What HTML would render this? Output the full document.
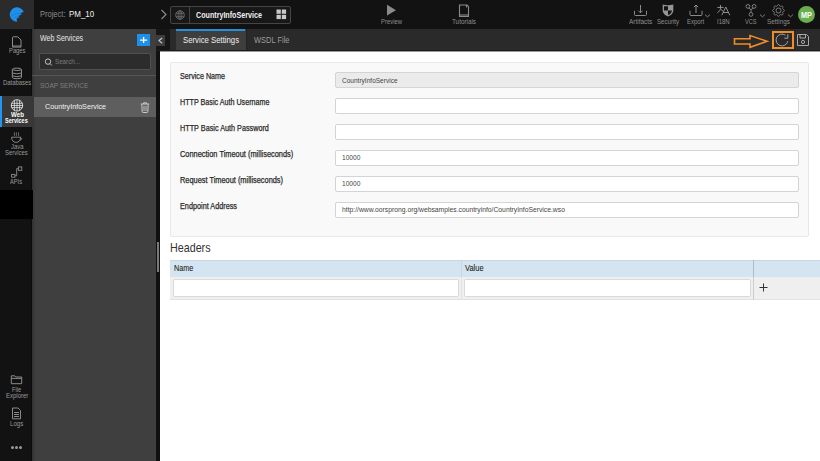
<!DOCTYPE html>
<html><head><meta charset="utf-8">
<style>
*{margin:0;padding:0;box-sizing:border-box}
html,body{width:820px;height:461px;overflow:hidden;background:#fff;font-family:"Liberation Sans",sans-serif}
.a{position:absolute}
.t{position:absolute;white-space:nowrap;line-height:1;transform-origin:0 0}
</style></head><body>
<!-- base areas -->
<div class="a" style="left:0;top:0;width:820px;height:29px;background:#121212"></div>
<div class="a" style="left:0;top:0;width:34px;height:29px;background:#2b2b2b"></div>
<div class="a" style="left:0;top:29px;width:32px;height:432px;background:#121212"></div>
<div class="a" style="left:32px;top:29px;width:124px;height:432px;background:linear-gradient(90deg,#303030 0,#3a3a3a 2px,#3f3f3f 4px,#3f3f3f 100%)"></div>
<div class="a" style="left:31px;top:29px;width:1px;height:432px;background:#0b0b0b"></div>
<div class="a" style="left:156px;top:29px;width:4px;height:432px;background:#111"></div>
<div class="a" style="left:156px;top:29px;width:664px;height:22px;background:#161616"></div>
<div class="a" style="left:170px;top:29px;width:650px;height:22px;background:#2a2a2a"></div>
<div class="a" style="left:160px;top:51px;width:660px;height:410px;background:#fff"></div>

<!-- logo -->
<svg class="a" style="left:9px;top:7px" width="16" height="16" viewBox="0 0 16 16">
<path d="M14.8 5 A7.25 7.25 0 1 0 8.2 14.8 L7.6 11.9 Q8.8 10.6 10.5 10.2 L9.5 9.3 Q11 7.9 12.8 7.6 L11.5 6.3 Q13 5.2 14.8 5 Z" fill="#1f8fe9"/>
<path d="M1.4 9.6 Q4.5 6.2 11.5 6.3 M3.6 12.6 Q5.6 9.4 9.5 9.3" stroke="#1878c8" stroke-width="0.6" fill="none"/>
</svg>

<!-- chevron & selector -->
<svg class="a" style="left:160px;top:9px" width="8" height="11" viewBox="0 0 8 11"><path d="M1.5 1 L6 5.5 L1.5 10" stroke="#8a8a8a" stroke-width="1.2" fill="none"/></svg>
<div class="a" style="left:170px;top:6px;width:121px;height:18px;border:1px solid #454545;border-radius:2px;background:#181818"></div>
<div class="a" style="left:189px;top:7px;width:1px;height:16px;background:#454545"></div>
<svg class="a" style="left:175px;top:10px" width="10" height="10" viewBox="0 0 10 10" fill="none" stroke="#6f6f6f" stroke-width="0.8"><circle cx="5" cy="5" r="4.3"/><ellipse cx="5" cy="5" rx="2" ry="4.3"/><path d="M0.7 3.3H9.3M0.7 6.7H9.3M5 0.7V9.3"/></svg>
<svg class="a" style="left:276px;top:9px" width="11" height="11" viewBox="0 0 11 11" fill="#c8c8c8"><rect x="0.5" y="0.5" width="4.3" height="4.3"/><rect x="5.8" y="0.5" width="4.3" height="4.3"/><rect x="0.5" y="5.8" width="4.3" height="4.3"/><rect x="5.8" y="5.8" width="4.3" height="4.3"/></svg>

<!-- preview / tutorials -->
<svg class="a" style="left:386px;top:4px" width="11" height="13" viewBox="0 0 11 13"><path d="M1 0.8 L10 6.2 L1 11.6 Z" fill="#8a8a8a"/></svg>
<svg class="a" style="left:458px;top:4px" width="12" height="14" viewBox="0 0 12 14" fill="none" stroke="#8a8a8a" stroke-width="1.1"><path d="M1.5 1 H9 L10.5 2.5 V12.5 H1.5 Z"/><path d="M1.5 11 H10.5" /><path d="M8.5 1 V3.5"/></svg>

<!-- right icons -->
<svg class="a" style="left:633px;top:5px" width="15" height="12" viewBox="0 0 15 12" fill="none" stroke="#8a8a8a" stroke-width="1"><path d="M1.5 5.8 V9.5 Q1.5 10.5 2.5 10.5 H12.5 Q13.5 10.5 13.5 9.5 V5.8"/><path d="M7.5 0 V7.8 M5.4 5.7 L7.5 7.8 L9.6 5.7"/></svg>
<svg class="a" style="left:662px;top:4px" width="12" height="13" viewBox="0 0 12 13"><path d="M0.7 0.6 Q6 1.8 11.3 0.6 V6.2 C11.3 9.4 8.6 11.4 6 12.4 C3.4 11.4 0.7 9.4 0.7 6.2 Z" fill="#959595"/><path d="M2 2.2 H6 V6.5 H2 Z M6 6.5 H10 C9.8 8.8 8 10.4 6 11.1 Z" fill="#141414"/></svg>
<svg class="a" style="left:689px;top:4px" width="14" height="13" viewBox="0 0 14 13" fill="none" stroke="#8a8a8a" stroke-width="1"><path d="M1 6.8 V10.5 Q1 11.5 2 11.5 H12 Q13 11.5 13 10.5 V6.8"/><path d="M7 9 V1 M4.9 3.1 L7 1 L9.1 3.1"/></svg>
<svg class="a" style="left:704px;top:13px" width="7" height="5" viewBox="0 0 7 5" fill="none" stroke="#8a8a8a" stroke-width="0.9"><path d="M1 1.6 L3.5 3.8 L6 1.6"/></svg>
<svg class="a" style="left:716px;top:4px" width="15" height="12" viewBox="0 0 15 12" fill="none" stroke="#9a9a9a" stroke-width="0.9"><path d="M1.3 3.4 H7.6 M4.5 1 V4.2 C4.4 6.2 3.2 7.6 1.3 8.8 M4.7 5 L7.2 7.4"/><path d="M5.8 11.2 L9.8 3 L13.8 11.2 M7.2 8.5 H12.4"/></svg>
<svg class="a" style="left:744px;top:3px" width="14" height="15" viewBox="0 0 14 15" fill="none" stroke="#8a8a8a" stroke-width="0.9"><circle cx="3.9" cy="3.4" r="1.9"/><circle cx="10.1" cy="3.4" r="1.9"/><circle cx="7" cy="11.4" r="1.9"/><path d="M4.6 5.1 L7 6.6 L9.4 5.1 M7 6.6 V9.5"/></svg>
<svg class="a" style="left:759px;top:13px" width="7" height="5" viewBox="0 0 7 5" fill="none" stroke="#8a8a8a" stroke-width="0.9"><path d="M1 1.6 L3.5 3.8 L6 1.6"/></svg>
<svg class="a" style="left:771px;top:4px" width="15" height="13" viewBox="0 0 15 13" fill="none" stroke="#8a8a8a" stroke-width="0.9"><path d="M13.40 6.50 L13.38 6.73 L13.31 6.96 L13.18 7.17 L13.00 7.37 L12.60 7.51 L12.20 7.63 L12.00 7.77 L11.85 7.91 L11.74 8.06 L11.66 8.22 L11.60 8.39 L11.58 8.58 L11.58 8.79 L11.62 9.03 L11.82 9.39 L12.00 9.77 L11.99 10.04 L11.93 10.28 L11.82 10.49 L11.67 10.67 L11.49 10.82 L11.28 10.93 L11.04 10.99 L10.77 11.00 L10.39 10.82 L10.03 10.62 L9.79 10.58 L9.58 10.58 L9.39 10.60 L9.22 10.66 L9.06 10.74 L8.91 10.85 L8.77 11.00 L8.63 11.20 L8.51 11.60 L8.37 12.00 L8.17 12.18 L7.96 12.31 L7.73 12.38 L7.50 12.40 L7.27 12.38 L7.04 12.31 L6.83 12.18 L6.63 12.00 L6.49 11.60 L6.37 11.20 L6.23 11.00 L6.09 10.85 L5.94 10.74 L5.78 10.66 L5.61 10.60 L5.42 10.58 L5.21 10.58 L4.97 10.62 L4.61 10.82 L4.23 11.00 L3.96 10.99 L3.72 10.93 L3.51 10.82 L3.33 10.67 L3.18 10.49 L3.07 10.28 L3.01 10.04 L3.00 9.77 L3.18 9.39 L3.38 9.03 L3.42 8.79 L3.42 8.58 L3.40 8.39 L3.34 8.22 L3.26 8.06 L3.15 7.91 L3.00 7.77 L2.80 7.63 L2.40 7.51 L2.00 7.37 L1.82 7.17 L1.69 6.96 L1.62 6.73 L1.60 6.50 L1.62 6.27 L1.69 6.04 L1.82 5.83 L2.00 5.63 L2.40 5.49 L2.80 5.37 L3.00 5.23 L3.15 5.09 L3.26 4.94 L3.34 4.78 L3.40 4.61 L3.42 4.42 L3.42 4.21 L3.38 3.97 L3.18 3.61 L3.00 3.23 L3.01 2.96 L3.07 2.72 L3.18 2.51 L3.33 2.33 L3.51 2.18 L3.72 2.07 L3.96 2.01 L4.23 2.00 L4.61 2.18 L4.97 2.38 L5.21 2.42 L5.42 2.42 L5.61 2.40 L5.78 2.34 L5.94 2.26 L6.09 2.15 L6.23 2.00 L6.37 1.80 L6.49 1.40 L6.63 1.00 L6.83 0.82 L7.04 0.69 L7.27 0.62 L7.50 0.60 L7.73 0.62 L7.96 0.69 L8.17 0.82 L8.37 1.00 L8.51 1.40 L8.63 1.80 L8.77 2.00 L8.91 2.15 L9.06 2.26 L9.22 2.34 L9.39 2.40 L9.58 2.42 L9.79 2.42 L10.03 2.38 L10.39 2.18 L10.77 2.00 L11.04 2.01 L11.28 2.07 L11.49 2.18 L11.67 2.33 L11.82 2.51 L11.93 2.72 L11.99 2.96 L12.00 3.23 L11.82 3.61 L11.62 3.97 L11.58 4.21 L11.58 4.42 L11.60 4.61 L11.66 4.78 L11.74 4.94 L11.85 5.09 L12.00 5.23 L12.20 5.37 L12.60 5.49 L13.00 5.63 L13.18 5.83 L13.31 6.04 L13.38 6.27 Z"/><circle cx="7.5" cy="6.5" r="2.5"/></svg>
<svg class="a" style="left:787px;top:13px" width="7" height="5" viewBox="0 0 7 5" fill="none" stroke="#8a8a8a" stroke-width="0.9"><path d="M1 1.6 L3.5 3.8 L6 1.6"/></svg>
<div class="a" style="left:798px;top:6px;width:17px;height:17px;border-radius:50%;background:#6aae4f"></div>

<!-- left column -->
<div class="a" style="left:0;top:96px;width:33px;height:31px;background:#383838"></div>
<div class="a" style="left:0;top:96px;width:2px;height:31px;background:#2196f3"></div>
<div class="a" style="left:0;top:190px;width:33px;height:29px;background:#000"></div>
<svg class="a" style="left:11px;top:36px" width="11" height="13" viewBox="0 0 11 13" fill="none" stroke="#8e8e8e" stroke-width="1"><path d="M2.3 0.8 H6.8 L10 4 V11.1 H1.5 V1.6 Q1.5 0.8 2.3 0.8 Z"/><path d="M1.5 10 H10"/></svg>
<svg class="a" style="left:11px;top:67px" width="12" height="13" viewBox="0 0 12 13" fill="none" stroke="#8e8e8e" stroke-width="1"><path d="M1.3 2.4 Q1.3 1.1 5.9 1.1 Q10.5 1.1 10.5 2.4 V10.4 Q10.5 11.7 5.9 11.7 Q1.3 11.7 1.3 10.4 Z"/><path d="M1.3 2.8 Q5.9 4.4 10.5 2.8 M1.3 6 Q5.9 7.6 10.5 6 M1.3 8.9 Q5.9 10.4 10.5 8.9"/></svg>
<svg class="a" style="left:10px;top:99px" width="14" height="13" viewBox="0 0 14 13" fill="none" stroke="#f4f4f4" stroke-width="0.8"><circle cx="7" cy="6.4" r="5.7"/><path d="M4.5 1.2 Q4.1 6.4 4.5 11.6 M7 0.8 V12 M9.5 1.2 Q9.9 6.4 9.5 11.6 M1.6 4.3 H12.4 M1.1 6.5 H12.9 M1.6 8.6 H12.4" stroke-width="0.7"/></svg>
<svg class="a" style="left:10px;top:131px" width="13" height="13" viewBox="0 0 13 13" fill="none" stroke="#8e8e8e" stroke-width="0.9"><path d="M1.6 6.2 H10.6 C10.6 9.6 8.6 11.4 6.1 11.4 C3.6 11.4 1.6 9.6 1.6 6.2 Z"/><path d="M10.4 7 C12.2 6.8 12.2 8.8 10 9"/><path d="M4.4 1.3 V4.8 M6.4 1.3 V4.8 M8.5 1.3 V4.8" stroke-width="0.7"/></svg>
<svg class="a" style="left:10px;top:166px" width="13" height="13" viewBox="0 0 13 13" fill="none" stroke="#8e8e8e" stroke-width="0.9"><rect x="8.4" y="0.9" width="3.4" height="3.4"/><rect x="1.6" y="8.4" width="3.3" height="2.8"/><path d="M8.4 2.6 H6.7 V9.8 H4.9"/></svg>
<svg class="a" style="left:10px;top:374px" width="13" height="11" viewBox="0 0 13 11" fill="none" stroke="#8a8a8a" stroke-width="1"><path d="M1.3 1.8 H4.8 L5.8 3 H11.7 V9.7 H1.3 Z M1.3 4.4 H11.7"/></svg>
<svg class="a" style="left:11px;top:407px" width="11" height="13" viewBox="0 0 11 13" fill="none" stroke="#8a8a8a" stroke-width="1"><path d="M1.5 1 H7 L9.5 3.5 V11.8 H1.5 Z"/><path d="M3 5.5 H8 M3 7.5 H8 M3 9.5 H8"/></svg>
<div class="a" style="left:11px;top:446px;width:3px;height:3px;border-radius:50%;background:#999"></div>
<div class="a" style="left:15px;top:446px;width:3px;height:3px;border-radius:50%;background:#999"></div>
<div class="a" style="left:19px;top:446px;width:3px;height:3px;border-radius:50%;background:#999"></div>

<!-- panel content -->
<div class="a" style="left:137px;top:34px;width:13px;height:12px;background:#1e90ea"></div>
<svg class="a" style="left:137px;top:34px" width="13" height="12" viewBox="0 0 13 12"><path d="M6.6 2.9 V8.9 M3.1 6.2 H10.2" stroke="#fff" stroke-width="1.3"/></svg>
<div class="a" style="left:39px;top:53px;width:112px;height:17px;background:#2c2c2c;border:1px solid #505050;border-radius:2px"></div>
<svg class="a" style="left:44px;top:58px" width="9" height="8" viewBox="0 0 9 8" fill="none" stroke="#c4c4c4" stroke-width="1"><circle cx="4" cy="3.6" r="2.7"/><path d="M6 5.6 L7.8 7.4"/></svg>
<div class="a" style="left:32px;top:75px;width:124px;height:1px;background:#555"></div>
<div class="a" style="left:34px;top:97px;width:122px;height:20px;background:#5e5e5e"></div>
<svg class="a" style="left:140px;top:102px" width="10" height="11" viewBox="0 0 10 11" fill="none" stroke="#d8d8d8" stroke-width="0.9"><path d="M0.8 2 H9.2 M3.6 2 V0.8 H6.4 V2"/><path d="M1.8 2.3 L2.2 9.6 Q2.3 10.5 3.2 10.5 H6.8 Q7.7 10.5 7.8 9.6 L8.2 2.3"/><path d="M4 3.8 V9 M6 3.8 V9" stroke-width="0.8"/></svg>
<!-- gutter/collapse -->
<div class="a" style="left:157px;top:242px;width:2px;height:30px;background:#7a7a7a;border:0 solid #555"></div>

<!-- tabs -->
<div class="a" style="left:176px;top:29px;width:70px;height:21px;background:#3e3e3e"></div>
<div class="a" style="left:246px;top:29px;width:1px;height:21px;background:#232323"></div>
<div class="a" style="left:156px;top:50px;width:664px;height:1px;background:#1c1c1c"></div>
<div class="a" style="left:160px;top:51px;width:660px;height:1px;background:#9a9a9a"></div>
<div class="a" style="left:176px;top:29px;width:69px;height:2px;background:#268fd8"></div>
<svg class="a" style="left:733px;top:34px" width="37" height="15" viewBox="0 0 37 15" fill="none" stroke="#f28c28" stroke-width="1.6"><path d="M1.5 4.8 H17 V1.5 L34 7.3 L17 13.3 V10 H1.5 Z"/></svg>
<div class="a" style="left:772px;top:31px;width:22px;height:18px;border:2px solid #f28c28"></div>
<svg class="a" style="left:774px;top:32px" width="16" height="16" viewBox="0 0 16 16" fill="none" stroke="#b0b0b0" stroke-width="0.9"><path d="M11.38 3.17 A5.90 5.90 0 1 0 13.77 9.23"/><path d="M13.8 2.2 V6.2 H10.3"/></svg>
<svg class="a" style="left:796px;top:33px" width="14" height="14" viewBox="0 0 14 14" fill="none" stroke="#a8a8a8" stroke-width="1"><path d="M1.5 1.5 H10.5 L12.5 3.5 V12.5 H1.5 Z"/><path d="M4 1.5 V5 H9.5 V1.5"/><circle cx="7" cy="9" r="1.6"/></svg>

<!-- collapse btn -->
<div class="a" style="left:155px;top:35px;width:10px;height:11px;background:#3c3c3c"></div>
<svg class="a" style="left:157px;top:37px" width="7" height="7" viewBox="0 0 7 7" fill="none" stroke="#c8c8c8" stroke-width="0.9"><path d="M5.2 1 L2 3.6 L5.2 6.2" stroke-width="1.15"/></svg>
<!-- form -->
<div class="a" style="left:170px;top:62px;width:639px;height:175px;background:#f9f9f9;border:1px solid #e8e8e8;border-radius:2px"></div>
<div class="a" style="left:335px;top:72px;width:464px;height:16px;border:1px solid #d4d4d4;border-radius:2px;background:#ebebeb"></div>
<div class="a" style="left:335px;top:98px;width:464px;height:16px;border:1px solid #d4d4d4;border-radius:2px;background:#fff"></div>
<div class="a" style="left:335px;top:124px;width:464px;height:16px;border:1px solid #d4d4d4;border-radius:2px;background:#fff"></div>
<div class="a" style="left:335px;top:150px;width:464px;height:16px;border:1px solid #d4d4d4;border-radius:2px;background:#fff"></div>
<div class="a" style="left:335px;top:176px;width:464px;height:16px;border:1px solid #d4d4d4;border-radius:2px;background:#fff"></div>
<div class="a" style="left:335px;top:202px;width:464px;height:16px;border:1px solid #d4d4d4;border-radius:2px;background:#fff"></div>

<!-- headers -->
<div class="a" style="left:170px;top:260px;width:650px;height:17px;background:#d4e5f1;border-top:1px solid #c6d8e6"></div>
<div class="a" style="left:170px;top:277px;width:650px;height:23px;background:#efefef;border-bottom:1px solid #e2e2e2"></div>
<div class="a" style="left:461px;top:260px;width:1px;height:17px;background:#c9d7e1"></div>
<div class="a" style="left:461px;top:277px;width:1px;height:23px;background:#e2e2e2"></div>
<div class="a" style="left:753px;top:260px;width:1px;height:17px;background:#b0bcc4"></div>
<div class="a" style="left:753px;top:277px;width:1px;height:23px;background:#cdcdcd"></div>
<div class="a" style="left:173px;top:279px;width:286px;height:18px;background:#fff;border:1px solid #dadada;border-radius:2px"></div>
<div class="a" style="left:464px;top:279px;width:287px;height:18px;background:#fff;border:1px solid #dadada;border-radius:2px"></div>
<svg class="a" style="left:759px;top:283px" width="9" height="9" viewBox="0 0 9 9"><path d="M4.5 0.5 V8.5 M0.5 4.5 H8.5" stroke="#333" stroke-width="1"/></svg>

<div class="t" style="left:39.90px;top:11px;font-size:8.20px;color:#8d8d8d;font-weight:normal;transform:scaleX(0.918);">Project:</div>
<div class="t" style="left:68.60px;top:10px;font-size:9.01px;color:#eeeeee;font-weight:normal;transform:scaleX(0.883);">PM_10</div>
<div class="t" style="left:195.70px;top:11px;font-size:8.30px;color:#f0f0f0;font-weight:bold;transform:scaleX(0.861);">CountryInfoService</div>
<div class="t" style="left:380.60px;top:19px;font-size:6.70px;color:#8f8f8f;font-weight:normal;transform:scaleX(0.883);">Preview</div>
<div class="t" style="left:452.00px;top:19px;font-size:6.70px;color:#8f8f8f;font-weight:normal;transform:scaleX(0.944);">Tutorials</div>
<div class="t" style="left:628.90px;top:19px;font-size:6.70px;color:#8f8f8f;font-weight:normal;transform:scaleX(0.967);">Artifacts</div>
<div class="t" style="left:657.20px;top:19px;font-size:6.70px;color:#8f8f8f;font-weight:normal;transform:scaleX(0.912);">Security</div>
<div class="t" style="left:687.00px;top:19px;font-size:6.70px;color:#8f8f8f;font-weight:normal;transform:scaleX(0.890);">Export</div>
<div class="t" style="left:717.00px;top:19px;font-size:6.70px;color:#8f8f8f;font-weight:normal;transform:scaleX(0.900);">I18N</div>
<div class="t" style="left:745.20px;top:19px;font-size:6.70px;color:#8f8f8f;font-weight:normal;transform:scaleX(0.843);">VCS</div>
<div class="t" style="left:767.30px;top:19px;font-size:6.70px;color:#8f8f8f;font-weight:normal;transform:scaleX(0.946);">Settings</div>
<div class="t" style="left:800.60px;top:11px;font-size:8.40px;color:#ffffff;font-weight:bold;transform:scaleX(0.869);">MP</div>
<div class="t" style="left:8.80px;top:48px;font-size:6.40px;color:#9a9a9a;font-weight:normal;transform:scaleX(0.911);">Pages</div>
<div class="t" style="left:2.90px;top:80px;font-size:6.30px;color:#9a9a9a;font-weight:normal;transform:scaleX(0.940);">Databases</div>
<div class="t" style="left:10.60px;top:112px;font-size:6.80px;color:#ffffff;font-weight:bold;transform:scaleX(0.907);">Web</div>
<div class="t" style="left:5.40px;top:118px;font-size:6.30px;color:#ffffff;font-weight:bold;transform:scaleX(0.877);">Services</div>
<div class="t" style="left:10.60px;top:144px;font-size:7.10px;color:#9a9a9a;font-weight:normal;transform:scaleX(0.827);">Java</div>
<div class="t" style="left:5.40px;top:149px;font-size:7.30px;color:#9a9a9a;font-weight:normal;transform:scaleX(0.814);">Services</div>
<div class="t" style="left:10.40px;top:179px;font-size:6.30px;color:#9a9a9a;font-weight:normal;transform:scaleX(0.907);">APIs</div>
<div class="t" style="left:12.00px;top:387px;font-size:6.30px;color:#9a9a9a;font-weight:normal;transform:scaleX(0.910);">File</div>
<div class="t" style="left:5.50px;top:393px;font-size:6.40px;color:#9a9a9a;font-weight:normal;transform:scaleX(0.938);">Explorer</div>
<div class="t" style="left:9.80px;top:421px;font-size:6.30px;color:#9a9a9a;font-weight:normal;transform:scaleX(0.971);">Logs</div>
<div class="t" style="left:40.00px;top:34px;font-size:8.60px;color:#e8e8e8;font-weight:normal;transform:scaleX(0.815);">Web Services</div>
<div class="t" style="left:54.80px;top:58px;font-size:7.70px;color:#7c7c7c;font-weight:normal;transform:scaleX(0.810);">Search...</div>
<div class="t" style="left:40.30px;top:82px;font-size:7.60px;color:#7e7e7e;font-weight:normal;transform:scaleX(0.857);">SOAP SERVICE</div>
<div class="t" style="left:45.10px;top:103px;font-size:7.80px;color:#f2f2f2;font-weight:normal;transform:scaleX(0.921);">CountryInfoService</div>
<div class="t" style="left:183.00px;top:36px;font-size:8.87px;color:#f0f0f0;font-weight:normal;transform:scaleX(0.875);">Service Settings</div>
<div class="t" style="left:253.80px;top:36px;font-size:8.87px;color:#9c9c9c;font-weight:normal;transform:scaleX(0.845);">WSDL File</div>
<div class="t" style="left:180.20px;top:73px;font-size:8.20px;color:#2b2b2b;font-weight:normal;transform:scaleX(0.876);-webkit-text-stroke:0.25px #2b2b2b">Service Name</div>
<div class="t" style="left:180.20px;top:99px;font-size:8.20px;color:#2b2b2b;font-weight:normal;transform:scaleX(0.875);-webkit-text-stroke:0.25px #2b2b2b">HTTP Basic Auth Username</div>
<div class="t" style="left:180.20px;top:125px;font-size:8.20px;color:#2b2b2b;font-weight:normal;transform:scaleX(0.885);-webkit-text-stroke:0.25px #2b2b2b">HTTP Basic Auth Password</div>
<div class="t" style="left:180.20px;top:151px;font-size:8.20px;color:#2b2b2b;font-weight:normal;transform:scaleX(0.905);-webkit-text-stroke:0.25px #2b2b2b">Connection Timeout (milliseconds)</div>
<div class="t" style="left:180.20px;top:177px;font-size:8.20px;color:#2b2b2b;font-weight:normal;transform:scaleX(0.902);-webkit-text-stroke:0.25px #2b2b2b">Request Timeout (milliseconds)</div>
<div class="t" style="left:180.20px;top:203px;font-size:8.20px;color:#2b2b2b;font-weight:normal;transform:scaleX(0.888);-webkit-text-stroke:0.25px #2b2b2b">Endpoint Address</div>
<div class="t" style="left:341.80px;top:77px;font-size:7.30px;color:#444444;font-weight:normal;transform:scaleX(0.895);">CountryInfoService</div>
<div class="t" style="left:341.60px;top:154px;font-size:7.00px;color:#444444;font-weight:normal;transform:scaleX(0.945);">10000</div>
<div class="t" style="left:341.60px;top:180px;font-size:7.00px;color:#444444;font-weight:normal;transform:scaleX(0.945);">10000</div>
<div class="t" style="left:341.60px;top:206px;font-size:7.40px;color:#444444;font-weight:normal;transform:scaleX(0.915);">http://www.oorsprong.org/websamples.countryinfo/CountryInfoService.wso</div>
<div class="t" style="left:169.91px;top:242px;font-size:12.10px;color:#333333;font-weight:normal;transform:scaleX(0.887);">Headers</div>
<div class="t" style="left:174.00px;top:264px;font-size:8.30px;color:#222222;font-weight:normal;transform:scaleX(0.873);-webkit-text-stroke:0.08px #222">Name</div>
<div class="t" style="left:465.20px;top:265px;font-size:8.20px;color:#222222;font-weight:normal;transform:scaleX(0.915);-webkit-text-stroke:0.08px #222">Value</div>

</body></html>
